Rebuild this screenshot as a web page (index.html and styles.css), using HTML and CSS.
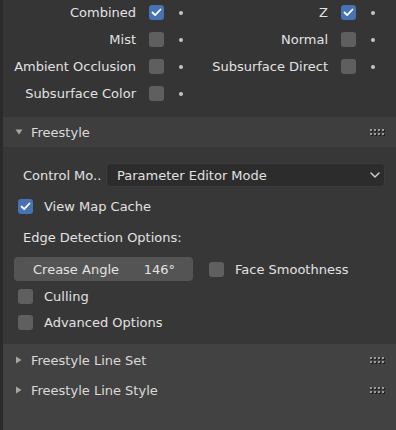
FILE: index.html
```html
<!DOCTYPE html>
<html lang="en">
<head>
    <meta charset="UTF-8">
    <title>Freestyle</title>
    <link rel="stylesheet" href="styles.css">
</head>
<body>
    <div class="editor">
        <div class="edge"></div>
        <div class="region">
            <div class="passes">
                <div class="pass">
                    <span class="pass-label">Combined</span>
                    <span class="check on"><svg width="11" height="9" viewBox="0 0 11 9"><path d="M1.5 4.5 L4.2 7.2 L9.5 1.5" fill="none" stroke="#fff" stroke-width="1.8" stroke-linecap="round" stroke-linejoin="round"/></svg></span>
                    <span class="dot"></span>
                </div>
                <div class="pass">
                    <span class="pass-label">Z</span>
                    <span class="check on"><svg width="11" height="9" viewBox="0 0 11 9"><path d="M1.5 4.5 L4.2 7.2 L9.5 1.5" fill="none" stroke="#fff" stroke-width="1.8" stroke-linecap="round" stroke-linejoin="round"/></svg></span>
                    <span class="dot"></span>
                </div>
                <div class="pass">
                    <span class="pass-label">Mist</span>
                    <span class="check"></span>
                    <span class="dot"></span>
                </div>
                <div class="pass">
                    <span class="pass-label">Normal</span>
                    <span class="check"></span>
                    <span class="dot"></span>
                </div>
                <div class="pass">
                    <span class="pass-label">Ambient Occlusion</span>
                    <span class="check"></span>
                    <span class="dot"></span>
                </div>
                <div class="pass">
                    <span class="pass-label">Subsurface Direct</span>
                    <span class="check"></span>
                    <span class="dot"></span>
                </div>
                <div class="pass">
                    <span class="pass-label">Subsurface Color</span>
                    <span class="check"></span>
                    <span class="dot"></span>
                </div>
            </div>

            <div class="panel">
                <div class="panel-header">
                    <svg class="arrow" width="8" height="6" viewBox="0 0 8 6"><path d="M0.5 0.5 H7.5 L4 5.5 Z" fill="#a6a6a6"/></svg>
                    <span class="panel-title">Freestyle</span>
                    <svg class="grip" width="15" height="7" viewBox="0 0 15 7">
                        <g fill="#1c1c1c"><rect x="1" y="1" width="2" height="2"/><rect x="5" y="1" width="2" height="2"/><rect x="9" y="1" width="2" height="2"/><rect x="13" y="1" width="2" height="2"/><rect x="1" y="5" width="2" height="2"/><rect x="5" y="5" width="2" height="2"/><rect x="9" y="5" width="2" height="2"/><rect x="13" y="5" width="2" height="2"/></g>
                        <g fill="#9a9a9a"><rect x="0" y="0" width="2" height="2"/><rect x="4" y="0" width="2" height="2"/><rect x="8" y="0" width="2" height="2"/><rect x="12" y="0" width="2" height="2"/><rect x="0" y="4" width="2" height="2"/><rect x="4" y="4" width="2" height="2"/><rect x="8" y="4" width="2" height="2"/><rect x="12" y="4" width="2" height="2"/></g>
                    </svg>
                </div>
                <div class="panel-body">
                    <div class="row control-row">
                        <span class="row-label">Control Mo..</span>
                        <div class="dropdown">
                            <span>Parameter Editor Mode</span>
                            <svg width="10" height="6" viewBox="0 0 10 6"><path d="M1 1 L5 5 L9 1" fill="none" stroke="#cfcfcf" stroke-width="1.5" stroke-linecap="round" stroke-linejoin="round"/></svg>
                        </div>
                    </div>
                    <div class="row map-row">
                        <span class="check on"><svg width="11" height="9" viewBox="0 0 11 9"><path d="M1.5 4.5 L4.2 7.2 L9.5 1.5" fill="none" stroke="#fff" stroke-width="1.8" stroke-linecap="round" stroke-linejoin="round"/></svg></span>
                        <span class="check-text">View Map Cache</span>
                    </div>
                    <div class="row edge-row">
                        <span class="row-label">Edge Detection Options:</span>
                    </div>
                    <div class="row crease-row">
                        <div class="slider">
                            <span>Crease Angle</span>
                            <span>146°</span>
                        </div>
                        <span class="check"></span>
                        <span class="check-text">Face Smoothness</span>
                    </div>
                    <div class="row culling-row">
                        <span class="check"></span>
                        <span class="check-text">Culling</span>
                    </div>
                    <div class="row advanced-row">
                        <span class="check"></span>
                        <span class="check-text">Advanced Options</span>
                    </div>
                </div>
            </div>

            <div class="closed-panels">
                <div class="panel-header closed">
                    <svg class="arrow" width="8" height="8" viewBox="0 0 8 8"><path d="M1 0.5 V7.5 L6.5 4 Z" fill="#a6a6a6"/></svg>
                    <span class="panel-title">Freestyle Line Set</span>
                    <svg class="grip" width="15" height="7" viewBox="0 0 15 7">
                        <g fill="#1c1c1c"><rect x="1" y="1" width="2" height="2"/><rect x="5" y="1" width="2" height="2"/><rect x="9" y="1" width="2" height="2"/><rect x="13" y="1" width="2" height="2"/><rect x="1" y="5" width="2" height="2"/><rect x="5" y="5" width="2" height="2"/><rect x="9" y="5" width="2" height="2"/><rect x="13" y="5" width="2" height="2"/></g>
                        <g fill="#9a9a9a"><rect x="0" y="0" width="2" height="2"/><rect x="4" y="0" width="2" height="2"/><rect x="8" y="0" width="2" height="2"/><rect x="12" y="0" width="2" height="2"/><rect x="0" y="4" width="2" height="2"/><rect x="4" y="4" width="2" height="2"/><rect x="8" y="4" width="2" height="2"/><rect x="12" y="4" width="2" height="2"/></g>
                    </svg>
                </div>
                <div class="panel-header closed">
                    <svg class="arrow" width="8" height="8" viewBox="0 0 8 8"><path d="M1 0.5 V7.5 L6.5 4 Z" fill="#a6a6a6"/></svg>
                    <span class="panel-title">Freestyle Line Style</span>
                    <svg class="grip" width="15" height="7" viewBox="0 0 15 7">
                        <g fill="#1c1c1c"><rect x="1" y="1" width="2" height="2"/><rect x="5" y="1" width="2" height="2"/><rect x="9" y="1" width="2" height="2"/><rect x="13" y="1" width="2" height="2"/><rect x="1" y="5" width="2" height="2"/><rect x="5" y="5" width="2" height="2"/><rect x="9" y="5" width="2" height="2"/><rect x="13" y="5" width="2" height="2"/></g>
                        <g fill="#9a9a9a"><rect x="0" y="0" width="2" height="2"/><rect x="4" y="0" width="2" height="2"/><rect x="8" y="0" width="2" height="2"/><rect x="12" y="0" width="2" height="2"/><rect x="0" y="4" width="2" height="2"/><rect x="4" y="4" width="2" height="2"/><rect x="8" y="4" width="2" height="2"/><rect x="12" y="4" width="2" height="2"/></g>
                    </svg>
                </div>
            </div>
        </div>
    </div>
</body>
</html>
```

FILE: styles.css
```css
* {
    margin: 0;
    padding: 0;
    box-sizing: border-box;
}

body {
    width: 396px;
    height: 430px;
    overflow: hidden;
    background: #424242;
    font-family: 'DejaVu Sans', 'Noto Sans', sans-serif;
    font-size: 13px;
    color: #e2e2e2;
}

.editor {
    display: flex;
    height: 430px;
}

.edge {
    width: 3px;
    background: #2a2a2a;
}

.region {
    flex: 1;
    display: flex;
    flex-direction: column;
}

/* render passes, two columns */
.passes {
    display: grid;
    grid-template-columns: 193px 200px;
    grid-auto-rows: 27px;
    margin-top: -1px;
    padding-bottom: 10px;
    background: #353535;
}

.pass {
    display: flex;
    align-items: center;
}

.pass-label {
    width: 133px;
    text-align: right;
    white-space: nowrap;
}

.pass:nth-child(even) .pass-label {
    width: 132px;
}

.pass .check {
    margin-left: 13px;
}

.dot {
    width: 4px;
    height: 4px;
    border-radius: 50%;
    background: #c4c4c4;
    margin-left: 15px;
}

.check {
    flex: none;
    width: 15px;
    height: 15px;
    border-radius: 3px;
    background: #5f5f5f;
    display: flex;
    align-items: center;
    justify-content: center;
}

.check.on {
    background: #4772b3;
}

/* panels */
.panel-header {
    display: flex;
    align-items: center;
    height: 30px;
    padding: 0 11px 0 12px;
    background: #3e3e3e;
}

.arrow {
    flex: none;
}

.panel-title {
    flex: 1;
    margin-left: 8px;
    color: #dadada;
}

.panel-body {
    background: #373737;
    padding: 16px 11px 10px 11px;
}

.row {
    display: flex;
    align-items: center;
    height: 24px;
}

.control-row {
    margin-bottom: 7px;
}

.row-label {
    margin-left: 9px;
    white-space: nowrap;
}

.control-row .row-label {
    width: 83px;
}

.dropdown {
    flex: 1;
    height: 24px;
    display: flex;
    align-items: center;
    justify-content: space-between;
    padding: 0 4px 0 10px;
    background: #2c2c2c;
    border: 1px solid #3c3c3c;
    border-radius: 4px;
}

.map-row {
    margin-bottom: 7px;
}

.map-row .check,
.culling-row .check,
.advanced-row .check {
    margin-left: 4px;
}

.check-text {
    margin-left: 11px;
    white-space: nowrap;
}

.edge-row {
    margin-bottom: 8px;
}

.crease-row {
    margin-bottom: 3px;
}

.slider {
    width: 179px;
    height: 24px;
    display: flex;
    align-items: center;
    justify-content: space-between;
    padding: 0 18px 0 19px;
    background: #545454;
    border-radius: 4px;
}

.crease-row .check {
    margin-left: 16px;
}

.culling-row {
    margin-bottom: 2px;
}

.closed-panels {
    flex: 1;
    background: #424242;
    padding-top: 1px;
}

.panel-header.closed {
    background: #424242;
}
```
